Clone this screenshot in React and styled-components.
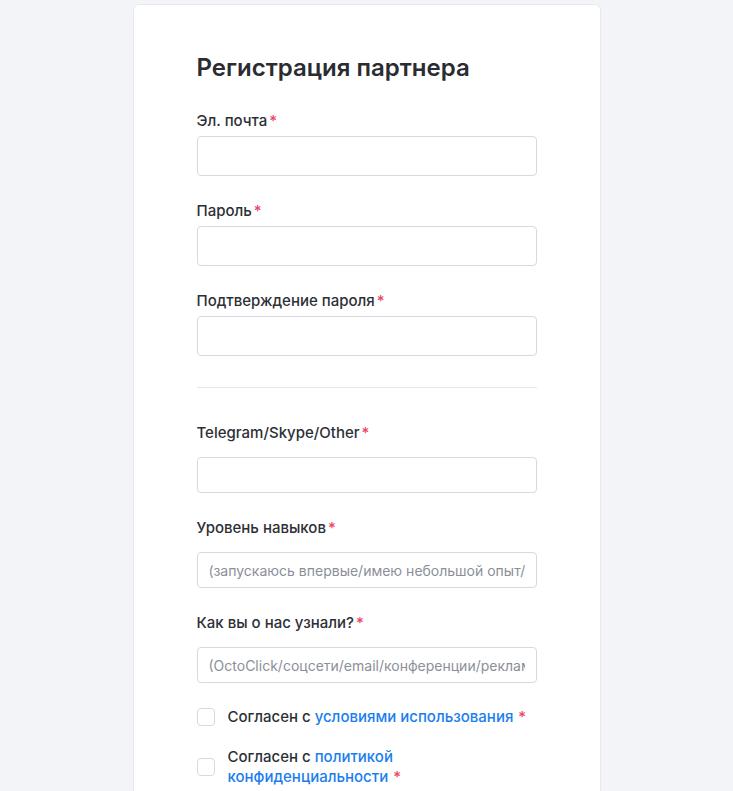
import React, { useState } from 'react';
import styled, { createGlobalStyle } from 'styled-components';

const GlobalStyle = createGlobalStyle`
  html, body {
    margin: 0;
    padding: 0;
    background: #f3f4f8;
    font-family: Inter, "Noto Sans", Arial, sans-serif;
    color: #2a2c31;
  }
`;

const Page = styled.div`
  display: flex;
  justify-content: center;
  padding-top: 4px;
  min-height: 787px;
`;

const Card = styled.div`
  box-sizing: border-box;
  width: 468px;
  background: #fff;
  border: 1px solid #e6e8ee;
  border-bottom: none;
  border-radius: 6px 6px 0 0;
  padding: 47px 63px 40px;
`;

const Title = styled.h1`
  margin: 0 0 26px;
  font-size: 24px;
  line-height: 32px;
  font-weight: 600;
  color: #2a2c31;
`;

const Field = styled.div`
  display: flex;
  flex-direction: column;
  gap: ${(p) => p.gap}px;
  margin-bottom: 24px;
`;

const Label = styled.label`
  font-size: 15px;
  line-height: 22px;
  font-weight: 500;
  color: #2d2f35;
`;

const Star = styled.span`
  color: #ec4463;
  margin-left: ${(p) => (p.spaced ? 5 : 2)}px;
`;

const Input = styled.input`
  box-sizing: border-box;
  width: 100%;
  height: ${(p) => p.h}px;
  border: 1px solid #d6d9df;
  border-radius: 4px;
  padding: 0 11px;
  font-family: inherit;
  font-size: 14px;
  color: #2a2c31;
  outline: none;
  background: #fff;
  &::placeholder {
    color: #8b9098;
  }
`;

const Divider = styled.hr`
  border: none;
  border-top: 1px solid #e6e8ee;
  margin: 31px 0 34px;
`;

const Checks = styled.div`
  display: flex;
  flex-direction: column;
  gap: 20px;
`;

const CheckRow = styled.label`
  display: flex;
  align-items: center;
  gap: 13px;
  font-size: 15px;
  line-height: 20px;
  font-weight: 500;
  color: #2d2f35;
`;

const Box = styled.span`
  flex: none;
  box-sizing: border-box;
  width: 18px;
  height: 18px;
  border: 1px solid #d6d9df;
  border-radius: 4px;
  background: ${(p) => (p.checked ? '#1a7ef0' : '#fff')};
`;

const Link = styled.a`
  color: #1a7ef0;
  text-decoration: none;
`;

const fields = [
  { label: 'Эл. почта', type: 'email' },
  { label: 'Пароль', type: 'password' },
  { label: 'Подтверждение пароля', type: 'password' },
];

const extra = [
  { label: 'Telegram/Skype/Other', placeholder: '' },
  { label: 'Уровень навыков', placeholder: '(запускаюсь впервые/имею небольшой опыт/профессионал)' },
  { label: 'Как вы о нас узнали?', placeholder: '(OctoClick/соцсети/email/конференции/реклама)' },
];

const App = () => {
  const [terms, setTerms] = useState(false);
  const [privacy, setPrivacy] = useState(false);

  return (
    <Page>
      <GlobalStyle />
      <Card>
        <Title>Регистрация партнера</Title>
        {fields.map((f) => (
          <Field key={f.label} gap={4}>
            <Label>
              {f.label}
              <Star>*</Star>
            </Label>
            <Input h={40} type={f.type} />
          </Field>
        ))}
        <Divider />
        {extra.map((f) => (
          <Field key={f.label} gap={13}>
            <Label>
              {f.label}
              <Star>*</Star>
            </Label>
            <Input h={36} type='text' placeholder={f.placeholder} />
          </Field>
        ))}
        <Checks>
          <CheckRow onClick={() => setTerms(!terms)}>
            <Box checked={terms} />
            <span>
              Согласен с <Link href='#'>условиями использования</Link>
              <Star spaced>*</Star>
            </span>
          </CheckRow>
          <CheckRow onClick={() => setPrivacy(!privacy)}>
            <Box checked={privacy} />
            <span>
              Согласен с <Link href='#'>политикой конфиденциальности</Link>
              <Star spaced>*</Star>
            </span>
          </CheckRow>
        </Checks>
      </Card>
    </Page>
  );
};

export default App;
